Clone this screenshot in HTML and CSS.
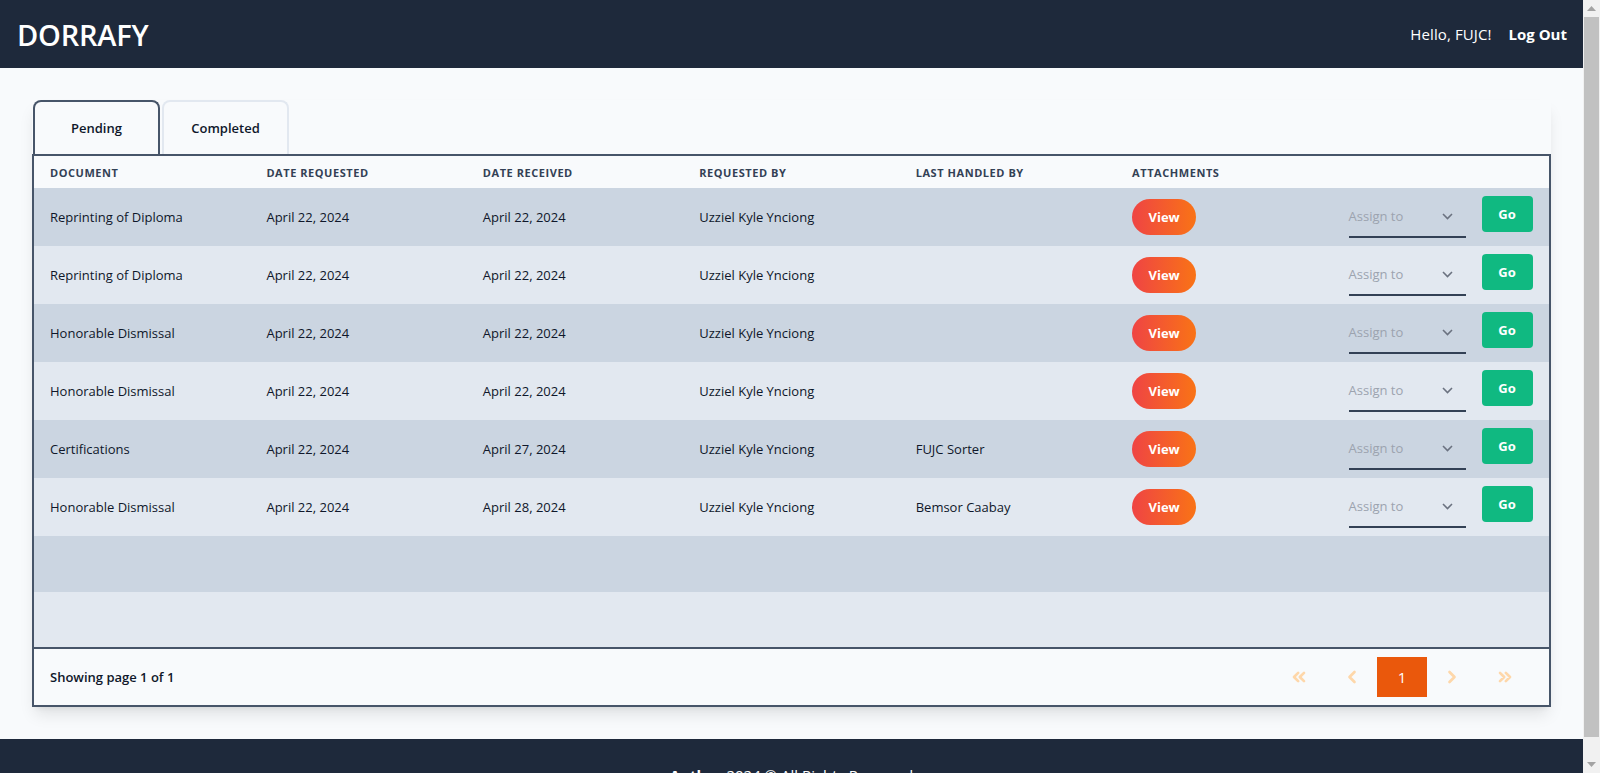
FILE: index.html
```html
<!DOCTYPE html>
<html lang="en">
<head>
<meta charset="utf-8">
<title>DORRAFY</title>
<link rel="stylesheet" href="styles.css">
</head>
<body>
<div class="app">
  <header class="topbar">
    <div class="logo">DORRAFY</div>
    <nav class="user">
      <span class="hello">Hello, FUJC!</span>
      <a class="logout" href="#">Log Out</a>
    </nav>
  </header>

  <main class="main">
    <section class="card">
      <div class="tabs">
        <button class="tab tab-active">Pending</button>
        <button class="tab">Completed</button>
      </div>
      <div class="table-wrap">
        <table class="grid">
          <thead>
            <tr class="head-row">
              <th>Document</th>
              <th>Date Requested</th>
              <th>Date Received</th>
              <th>Requested By</th>
              <th>Last Handled By</th>
              <th>Attachments</th>
              <th></th>
            </tr>
          </thead>
          <tbody>
            <tr class="row odd">
              <td>Reprinting of Diploma</td><td>April 22, 2024</td><td>April 22, 2024</td><td>Uzziel Kyle Ynciong</td><td></td>
              <td><button class="view">View</button></td>
              <td class="act-cell"><div class="actions"><div class="select"><span>Assign to</span><svg class="chev" width="11" height="7" viewBox="0 0 11 7"><path d="M1 1l4.5 4.5L10 1" fill="none" stroke="#6b7280" stroke-width="1.6"/></svg></div><button class="go">Go</button></div></td>
            </tr>
            <tr class="row even">
              <td>Reprinting of Diploma</td><td>April 22, 2024</td><td>April 22, 2024</td><td>Uzziel Kyle Ynciong</td><td></td>
              <td><button class="view">View</button></td>
              <td class="act-cell"><div class="actions"><div class="select"><span>Assign to</span><svg class="chev" width="11" height="7" viewBox="0 0 11 7"><path d="M1 1l4.5 4.5L10 1" fill="none" stroke="#6b7280" stroke-width="1.6"/></svg></div><button class="go">Go</button></div></td>
            </tr>
            <tr class="row odd">
              <td>Honorable Dismissal</td><td>April 22, 2024</td><td>April 22, 2024</td><td>Uzziel Kyle Ynciong</td><td></td>
              <td><button class="view">View</button></td>
              <td class="act-cell"><div class="actions"><div class="select"><span>Assign to</span><svg class="chev" width="11" height="7" viewBox="0 0 11 7"><path d="M1 1l4.5 4.5L10 1" fill="none" stroke="#6b7280" stroke-width="1.6"/></svg></div><button class="go">Go</button></div></td>
            </tr>
            <tr class="row even">
              <td>Honorable Dismissal</td><td>April 22, 2024</td><td>April 22, 2024</td><td>Uzziel Kyle Ynciong</td><td></td>
              <td><button class="view">View</button></td>
              <td class="act-cell"><div class="actions"><div class="select"><span>Assign to</span><svg class="chev" width="11" height="7" viewBox="0 0 11 7"><path d="M1 1l4.5 4.5L10 1" fill="none" stroke="#6b7280" stroke-width="1.6"/></svg></div><button class="go">Go</button></div></td>
            </tr>
            <tr class="row odd">
              <td>Certifications</td><td>April 22, 2024</td><td>April 27, 2024</td><td>Uzziel Kyle Ynciong</td><td>FUJC Sorter</td>
              <td><button class="view">View</button></td>
              <td class="act-cell"><div class="actions"><div class="select"><span>Assign to</span><svg class="chev" width="11" height="7" viewBox="0 0 11 7"><path d="M1 1l4.5 4.5L10 1" fill="none" stroke="#6b7280" stroke-width="1.6"/></svg></div><button class="go">Go</button></div></td>
            </tr>
            <tr class="row even">
              <td>Honorable Dismissal</td><td>April 22, 2024</td><td>April 28, 2024</td><td>Uzziel Kyle Ynciong</td><td>Bemsor Caabay</td>
              <td><button class="view">View</button></td>
              <td class="act-cell"><div class="actions"><div class="select"><span>Assign to</span><svg class="chev" width="11" height="7" viewBox="0 0 11 7"><path d="M1 1l4.5 4.5L10 1" fill="none" stroke="#6b7280" stroke-width="1.6"/></svg></div><button class="go">Go</button></div></td>
            </tr>
            <tr class="empty odd e1"><td colspan="7"></td></tr>
            <tr class="empty even e2"><td colspan="7"></td></tr>
          </tbody>
        </table>
        <div class="pager">
          <span class="showing">Showing page 1 of 1</span>
          <div class="pages">
            <button class="pg pg-edge"><svg width="20" height="20" viewBox="0 0 24 24"><path d="M11 17l-5-5 5-5M18 17l-5-5 5-5" fill="none" stroke="#fed7aa" stroke-width="3.2" stroke-linecap="round" stroke-linejoin="round"/></svg></button>
            <button class="pg"><svg width="20" height="20" viewBox="0 0 24 24"><path d="M15 18l-6-6 6-6" fill="none" stroke="#fed7aa" stroke-width="3.2" stroke-linecap="round" stroke-linejoin="round"/></svg></button>
            <button class="pg pg-current">1</button>
            <button class="pg"><svg width="20" height="20" viewBox="0 0 24 24"><path d="M9 18l6-6-6-6" fill="none" stroke="#fed7aa" stroke-width="3.2" stroke-linecap="round" stroke-linejoin="round"/></svg></button>
            <button class="pg pg-edge"><svg width="20" height="20" viewBox="0 0 24 24"><path d="M13 17l5-5-5-5M6 17l5-5-5-5" fill="none" stroke="#fed7aa" stroke-width="3.2" stroke-linecap="round" stroke-linejoin="round"/></svg></button>
          </div>
        </div>
      </div>
    </section>
  </main>

  <footer class="footer">
    <p><strong>Author</strong> 2024 © All Rights Reserved</p>
  </footer>
</div>
<div class="scrollbar">
  <div class="sb-btn"><svg width="9" height="5" viewBox="0 0 9 5"><path d="M0 5L4.5 0 9 5z" fill="#a3a3a3"/></svg></div>
  <div class="sb-track"><div class="sb-thumb"></div></div>
  <div class="sb-btn"><svg width="9" height="5" viewBox="0 0 9 5"><path d="M0 0h9L4.5 5z" fill="#a3a3a3"/></svg></div>
</div>
</body>
</html>
```

FILE: styles.css
```css
* { box-sizing: border-box; }

html, body {
  margin: 0;
  padding: 0;
  height: 773px;
  overflow: hidden;
}

body {
  display: flex;
  font-family: "Open Sans", "Noto Sans", sans-serif;
  color: #0f172a;
  background: #f8fafc;
}

.app {
  flex: 1;
  display: flex;
  flex-direction: column;
  overflow: hidden;
  min-width: 0;
}

/* top bar */
.topbar {
  flex: 0 0 68px;
  height: 68px;
  background: #1e293b;
  color: #fff;
  display: flex;
  align-items: center;
  justify-content: space-between;
  padding: 0 16px 0 17px;
}

.logo {
  font-size: 29px;
  font-weight: 600;
  letter-spacing: -0.2px;
  line-height: 1;
}

.user {
  display: flex;
  align-items: center;
  gap: 17px;
  font-size: 15px;
}

.hello { letter-spacing: 0.1px; }

.logout {
  color: #fff;
  font-weight: 700;
  text-decoration: none;
}

/* main */
.main {
  flex: 0 0 auto;
  padding: 32px;
}

.card {
  background: #f8fafc;
  box-shadow: 0 10px 15px -3px rgba(0, 0, 0, 0.1), 0 4px 6px -4px rgba(0, 0, 0, 0.1);
}

.tabs {
  display: flex;
  gap: 2px;
  padding-left: 1px;
}

.tab {
  width: 127px;
  height: 54px;
  border: 2px solid #e2e8f0;
  border-bottom: 0;
  border-radius: 8px 8px 0 0;
  background: #f8fafc;
  font-family: inherit;
  font-size: 13px;
  font-weight: 600;
  color: #0f172a;
  padding: 0;
}

.tab-active {
  border-color: #475569;
}

.table-wrap {
  border: 2px solid #475569;
}

.grid {
  width: 100%;
  border-collapse: collapse;
  table-layout: fixed;
}

.head-row th {
  height: 32px;
  padding: 0 16px;
  text-align: left;
  font-size: 11px;
  font-weight: 700;
  letter-spacing: 0.05em;
  text-transform: uppercase;
  color: #334155;
  background: #f8fafc;
  vertical-align: middle;
}

.row td {
  height: 58px;
  padding: 0 16px;
  font-size: 13px;
  color: #0f172a;
  vertical-align: middle;
  white-space: nowrap;
}

.odd { background: #cbd5e1; }
.even { background: #e2e8f0; }

.e1 td { height: 56px; }
.e2 td { height: 55px; }

.view {
  width: 64px;
  height: 36px;
  border: 0;
  border-radius: 9999px;
  background: linear-gradient(to right, #ef4444, #f97316);
  color: #fff;
  font-family: inherit;
  font-size: 13px;
  font-weight: 700;
  padding: 0;
  display: block;
}

.row td.act-cell {
  vertical-align: top;
  padding: 8px 16px 0;
}

.actions {
  display: flex;
  align-items: flex-start;
  gap: 16px;
}

.select {
  width: 117px;
  height: 42px;
  border-bottom: 2px solid #334155;
  display: flex;
  align-items: center;
  justify-content: space-between;
  padding: 0 13px 0 0;
  font-size: 13px;
  color: #9ca3af;
}

.go {
  width: 51px;
  height: 36px;
  border: 0;
  border-radius: 4px;
  background: #10b981;
  color: #fff;
  font-family: inherit;
  font-size: 13px;
  font-weight: 700;
  padding: 0;
}

/* pager */
.pager {
  border-top: 2px solid #475569;
  height: 58px;
  display: flex;
  align-items: center;
  justify-content: space-between;
  padding: 0 19px 0 16px;
}

.showing {
  font-size: 13px;
  font-weight: 600;
  color: #0f172a;
}

.pages {
  display: flex;
  align-items: center;
}

.pg {
  width: 50px;
  height: 40px;
  border: 0;
  background: transparent;
  display: flex;
  align-items: center;
  justify-content: center;
  padding: 0;
  font-family: inherit;
}

.pg-edge:first-child { margin-right: 3px; }
.pg-edge:last-child { margin-left: 3px; }

.pg-current {
  background: #ea580c;
  color: #fff;
  font-size: 15px;
  font-weight: 400;
}

/* footer */
.footer {
  flex: 1 0 auto;
  background: #1e293b;
  color: #fff;
  text-align: center;
  padding-top: 26px;
  font-size: 15px;
}

.footer p { margin: 0; }

/* scrollbar */
.scrollbar {
  flex: 0 0 17px;
  width: 17px;
  height: 773px;
  background: #f1f1f1;
  display: flex;
  flex-direction: column;
}

.sb-btn {
  flex: 0 0 17px;
  display: flex;
  align-items: center;
  justify-content: center;
}

.sb-track {
  flex: 1;
  padding: 0 1px;
}

.sb-thumb {
  height: 720px;
  background: #c1c1c1;
}
```
